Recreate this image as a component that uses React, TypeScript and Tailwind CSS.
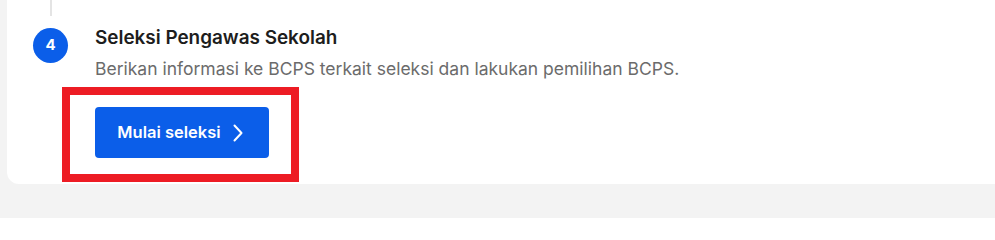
const App = () => {
  return (
    <div className="h-[218px] w-[995px] overflow-hidden bg-[#f3f3f3] font-['Inter',sans-serif]">
      <div className="pl-[7px]">
        {/* Step card */}
        <div className="w-[1010px] rounded-bl-xl bg-white pb-[26px]">
          <div className="flex">
            {/* Timeline column */}
            <div className="ml-[26px] flex w-[35px] flex-col items-center">
              <div className="h-[16px] w-[2px] bg-[#e4e4e4]" />
              <div className="mt-[12px] flex h-[35px] w-[35px] items-center justify-center rounded-full bg-[#0b5ee9] text-[15px] font-bold text-white">
                4
              </div>
            </div>

            {/* Content */}
            <div className="ml-[27px] pt-[25px]">
              <h3 className="text-[18.9px] leading-[26px] font-semibold text-[#1d1d1d]">
                Seleksi Pengawas Sekolah
              </h3>
              <p className="mt-[5px] text-[17.5px] leading-[26px] text-[#6b6b6b]">
                Berikan informasi ke BCPS terkait seleksi dan lakukan pemilihan BCPS.
              </p>
              <div className="relative mt-[25px] w-fit">
                <button className="flex h-[51px] w-[174px] items-center justify-center gap-[12px] rounded-[4px] bg-[#0b5ee9] pr-[4px] text-[16.5px] font-semibold text-white">
                  Mulai seleksi
                  <svg width="10" height="18" viewBox="0 0 10 18" fill="none">
                    <path
                      d="M1.5 1.5 8.5 9 1.5 16.5"
                      stroke="currentColor"
                      strokeWidth="2"
                      strokeLinecap="round"
                      strokeLinejoin="round"
                    />
                  </svg>
                </button>
                {/* Annotation highlight */}
                <div className="pointer-events-none absolute -top-[20px] -right-[30px] -bottom-[24px] -left-[33px] border-[8px] border-[#ed1c24]" />
              </div>
            </div>
          </div>
        </div>
      </div>
    </div>
  );
};

export default App;
